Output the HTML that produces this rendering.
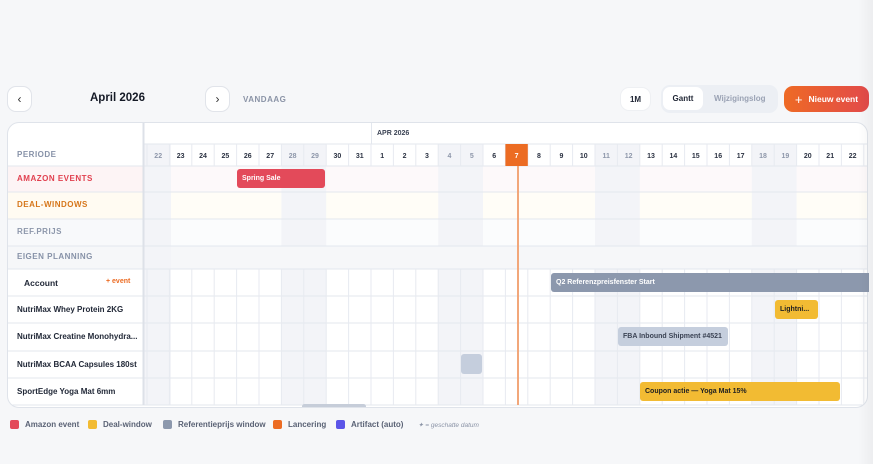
<!DOCTYPE html>
<html><head><style>
*{box-sizing:border-box;margin:0;padding:0}
body{width:873px;height:464px;background:#f6f7f9;font-family:"Liberation Sans",sans-serif;position:relative;overflow:hidden;color:#1e2433}
.a{position:absolute}
.btn{position:absolute;background:#fff;border:1px solid #e1e4ea;border-radius:9px;display:flex;align-items:center;justify-content:center}
.lbl{position:absolute;font-size:8px;font-weight:bold;letter-spacing:.5px;left:17px}
.pl{position:absolute;left:17px;font-size:8px;font-weight:bold;color:#222938}
.bar{position:absolute;border-radius:3px;font-size:7px;font-weight:bold;padding-left:5px;display:flex;align-items:center;white-space:nowrap;overflow:hidden}
.lg{position:absolute;top:420px;font-size:8px;color:#5a6275;display:flex;align-items:center;font-weight:bold}
.lg i{display:inline-block;width:9px;height:9px;border-radius:2px;margin-right:6px}
</style></head><body>
<div class="btn" style="left:7px;top:86px;width:25px;height:26px;font-size:12px;color:#333">‹</div>
<div class="a" style="left:90px;top:92px;font-size:11.5px;font-weight:bold;color:#151a26">April 2026</div>
<div class="btn" style="left:205px;top:86px;width:25px;height:26px;font-size:12px;color:#333">›</div>
<div class="a" style="left:243px;top:95px;font-size:8px;font-weight:bold;color:#8a93a6;letter-spacing:.5px">VANDAAG</div>
<div class="btn" style="left:620px;top:87px;width:31px;height:24px;font-size:8px;font-weight:bold;border-color:#eef0f3">1M</div>
<div class="a" style="left:661px;top:85px;width:117px;height:28px;background:#eceff4;border-radius:9px"></div>
<div class="a" style="left:663px;top:87px;width:40px;height:23px;background:#fff;border-radius:7px;font-size:8px;font-weight:bold;display:flex;align-items:center;justify-content:center">Gantt</div>
<div class="a" style="left:714px;top:94px;font-size:8px;color:#9aa2b4;font-weight:bold">Wijzigingslog</div>
<div class="a" style="left:784px;top:86px;width:85px;height:26px;border-radius:9px;background:linear-gradient(90deg,#ee6a25,#e24a4a);color:#fff;font-size:8.5px;font-weight:bold;display:flex;align-items:center;justify-content:center"><span style="font-size:13px;margin-right:6px;font-weight:normal">+</span>Nieuw event</div>

<div class="a" style="left:7px;top:122px;width:861px;height:286px;background:#fff;border:1px solid #dfe3ea;border-radius:12px;overflow:hidden">
<svg class="a" style="left:-7px;top:-122px" width="873" height="464">
<g id="bg">
<rect x="143" y="165" width="730" height="26" fill="#fdf9fa"/>
<rect x="143" y="191" width="730" height="27" fill="#fffdf7"/>
<rect x="143" y="218" width="730" height="27" fill="#fbfcfd"/>
<rect x="7" y="165" width="136" height="26" fill="#fdf4f5"/>
<rect x="7" y="191" width="136" height="27" fill="#fffbf2"/>
<rect x="7" y="218" width="136" height="27" fill="#f8f9fb"/>
<rect x="7" y="245" width="866" height="23" fill="#f6f7f9"/>
</g>
<g fill="#f3f4f8">
<rect x="143" y="143" width="27" height="261"/>
<rect x="280.4" y="143" width="44.8" height="102"/><rect x="280.4" y="268" width="44.8" height="136"/>
<rect x="437.2" y="143" width="44.8" height="102"/><rect x="437.2" y="268" width="44.8" height="136"/>
<rect x="594" y="143" width="44.8" height="102"/><rect x="594" y="268" width="44.8" height="136"/>
<rect x="750.8" y="143" width="44.8" height="102"/><rect x="750.8" y="268" width="44.8" height="136"/>
</g>
<g stroke="#e3e7ee" stroke-width="1">
<line x1="143" y1="143" x2="873" y2="143"/>
<line x1="7" y1="165" x2="873" y2="165"/>
<line x1="7" y1="191" x2="873" y2="191"/>
<line x1="7" y1="218" x2="873" y2="218"/>
<line x1="7" y1="245" x2="873" y2="245"/>
<line x1="7" y1="268" x2="873" y2="268"/>
<line x1="7" y1="295" x2="873" y2="295"/>
<line x1="7" y1="322" x2="873" y2="322"/>
<line x1="7" y1="350" x2="873" y2="350"/>
<line x1="7" y1="377" x2="873" y2="377"/>
<line x1="7" y1="404" x2="873" y2="404"/>
<line x1="142.5" y1="122" x2="142.5" y2="404" stroke="#dde1e8" stroke-width="2"/>
<line x1="370.5" y1="122" x2="370.5" y2="143"/>
</g>
<g id="vl" stroke="#e7eaf0"></g>
<rect x="504.4" y="143" width="22.4" height="22" fill="#ec6c23"/>
<line x1="517" y1="165" x2="517" y2="404" stroke="#f2a77a" stroke-width="2"/>
<g id="dn" font-size="7" font-weight="bold" text-anchor="middle" font-family="Liberation Sans"></g>
<text x="376" y="134" font-size="7" font-weight="bold" fill="#3b4354" font-family="Liberation Sans">APR 2026</text>
<rect x="301" y="403" width="64" height="5" rx="2.5" fill="#c6cdd9"/>
</svg>
</div>
<div class="lbl" style="top:150px;color:#8792a8">PERIODE</div>
<div class="lbl" style="top:174px;color:#e1404f">AMAZON EVENTS</div>
<div class="lbl" style="top:200px;color:#d6761a">DEAL-WINDOWS</div>
<div class="lbl" style="top:227px;color:#8d97ab">REF.PRIJS</div>
<div class="lbl" style="top:252px;color:#8792a8">EIGEN PLANNING</div>
<div class="pl" style="left:24px;top:278px;font-size:8.5px">Account</div>
<div class="a" style="left:106px;top:278px;font-size:7px;color:#ec6c23;font-weight:bold">+ event</div>
<div class="pl" style="top:305px">NutriMax Whey Protein 2KG</div>
<div class="pl" style="top:332px">NutriMax Creatine Monohydra...</div>
<div class="pl" style="top:360px">NutriMax BCAA Capsules 180st</div>
<div class="pl" style="top:387px">SportEdge Yoga Mat 6mm</div>

<div class="bar" style="left:237px;top:169px;width:88px;height:19px;background:#e34a5a;color:#fff">Spring Sale</div>
<div class="bar" style="left:551px;top:273px;width:318px;height:19px;background:#8c98ad;color:#fff;border-radius:3px 0 0 3px">Q2 Referenzpreisfenster Start</div>
<div class="bar" style="left:775px;top:300px;width:43px;height:19px;background:#f2bb33;color:#222">Lightni...</div>
<div class="bar" style="left:618px;top:327px;width:110px;height:19px;background:#c5cedd;color:#3b4354">FBA Inbound Shipment #4521</div>
<div class="bar" style="left:461px;top:354px;width:21px;height:20px;background:#c5cedd"></div>
<div class="bar" style="left:640px;top:382px;width:200px;height:19px;background:#f2bb33;color:#222">Coupon actie — Yoga Mat 15%</div>

<div class="lg" style="left:10px"><i style="background:#e34a5a"></i>Amazon event</div>
<div class="lg" style="left:88px"><i style="background:#f2bb33"></i>Deal-window</div>
<div class="lg" style="left:163px"><i style="background:#8c98ad"></i>Referentieprijs window</div>
<div class="lg" style="left:273px"><i style="background:#ec6c23"></i>Lancering</div>
<div class="lg" style="left:336px"><i style="background:#5b55e8"></i>Artifact (auto)</div>
<div class="a" style="left:418px;top:421px;font-size:6.5px;color:#8a93a6;font-style:italic">✦ = geschatte datum</div>
<div class="a" style="left:858px;top:0;width:15px;height:464px;background:linear-gradient(90deg,rgba(0,0,0,0),rgba(0,0,0,.04))"></div>
<script>
var ns="http://www.w3.org/2000/svg",vl=document.getElementById('vl'),dn=document.getElementById('dn');
var d=[22,23,24,25,26,27,28,29,30,31,1,2,3,4,5,6,7,8,9,10,11,12,13,14,15,16,17,18,19,20,21,22,23];
var we=[0,6,7,13,14,20,21,27,28];
for(var i=0;i<d.length;i++){var x=146+22.4*i;
var l=document.createElementNS(ns,'line');l.setAttribute('x1',x);l.setAttribute('x2',x);l.setAttribute('y1',143);l.setAttribute('y2',165);vl.appendChild(l);
var l2=document.createElementNS(ns,'line');l2.setAttribute('x1',x);l2.setAttribute('x2',x);l2.setAttribute('y1',268);l2.setAttribute('y2',404);vl.appendChild(l2);
var t=document.createElementNS(ns,'text');t.setAttribute('x',x+11.2);t.setAttribute('y',157);t.textContent=d[i];
t.setAttribute('fill',i==16?'#fff':(we.indexOf(i)>=0?'#8e97aa':'#2b3242'));dn.appendChild(t);}
</script>
</body></html>
